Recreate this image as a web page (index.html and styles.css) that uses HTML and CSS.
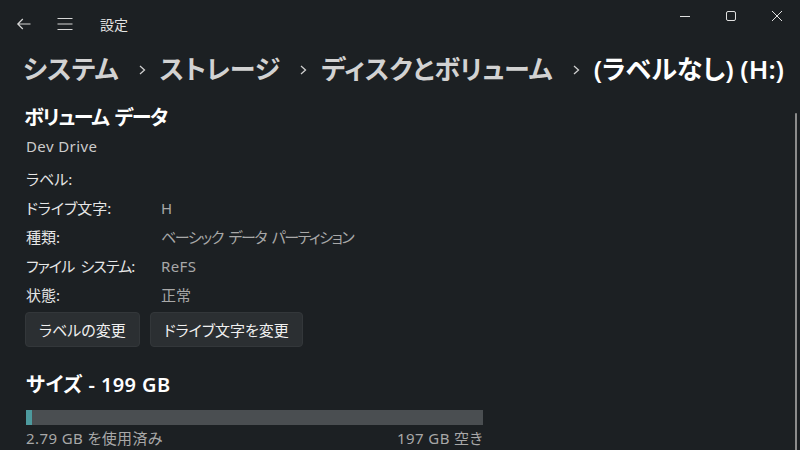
FILE: index.html
```html
<!DOCTYPE html>
<html lang="ja">
<head>
  <meta charset="UTF-8">
  <title>設定</title>
  <link rel="stylesheet" href="styles.css">
</head>
<body>
  <div class="window">
    <div class="titlebar">
      <div class="nav-icons">
        <svg class="icon back" width="16" height="16" viewBox="0 0 16 16">
          <path d="M14.5 8H1.8M6.8 3L1.8 8l5 5" fill="none" stroke="#d6d6d6" stroke-width="1.2"/>
        </svg>
        <svg class="icon menu" width="16" height="16" viewBox="0 0 16 16">
          <path d="M0.5 2.5h15M0.5 8h15M0.5 13.5h15" fill="none" stroke="#d6d6d6" stroke-width="1.2"/>
        </svg>
        <span class="app-name">設定</span>
      </div>
      <div class="win-controls">
        <div class="ctrl">
          <svg width="12" height="12" viewBox="0 0 12 12"><path d="M1 6.5h10" stroke="#e0e0e0" stroke-width="1"/></svg>
        </div>
        <div class="ctrl">
          <svg width="12" height="12" viewBox="0 0 12 12"><rect x="1.5" y="1.5" width="9" height="9" rx="1.5" fill="none" stroke="#e0e0e0" stroke-width="1"/></svg>
        </div>
        <div class="ctrl">
          <svg width="12" height="12" viewBox="0 0 12 12"><path d="M1 1l10 10M11 1L1 11" stroke="#e0e0e0" stroke-width="1"/></svg>
        </div>
      </div>
    </div>

    <div class="breadcrumb">
      <span class="crumb">システム</span>
      <svg class="chevron" width="10" height="12" viewBox="0 0 10 12"><path d="M3 2l4.5 4L3 10" fill="none" stroke="#cfcfcf" stroke-width="1.3"/></svg>
      <span class="crumb">ストレージ</span>
      <svg class="chevron" width="10" height="12" viewBox="0 0 10 12"><path d="M3 2l4.5 4L3 10" fill="none" stroke="#cfcfcf" stroke-width="1.3"/></svg>
      <span class="crumb">ディスクとボリューム</span>
      <svg class="chevron" width="10" height="12" viewBox="0 0 10 12"><path d="M3 2l4.5 4L3 10" fill="none" stroke="#cfcfcf" stroke-width="1.3"/></svg>
      <span class="crumb current">(ラベルなし) (H:)</span>
    </div>

    <div class="content">
      <h2 class="section-title volume-title">ボリューム データ</h2>
      <div class="subtitle">Dev Drive</div>

      <div class="props">
        <div class="prop-label">ラベル:</div><div class="prop-value"></div>
        <div class="prop-label">ドライブ文字:</div><div class="prop-value">H</div>
        <div class="prop-label">種類:</div><div class="prop-value jp-tight">ベーシック データ パーティション</div>
        <div class="prop-label jp">ファイル システム:</div><div class="prop-value latin">ReFS</div>
        <div class="prop-label">状態:</div><div class="prop-value">正常</div>
      </div>

      <div class="buttons">
        <button class="btn">ラベルの変更</button>
        <button class="btn">ドライブ文字を変更</button>
      </div>

      <h2 class="section-title size-title">サイズ - 199 GB</h2>
      <div class="usage">
        <div class="bar"><div class="bar-fill" style="width: 6px;"></div></div>
        <div class="usage-labels">
          <span>2.79 GB を使用済み</span>
          <span>197 GB 空き</span>
        </div>
      </div>
    </div>

    <div class="scrollbar"></div>
  </div>
</body>
</html>
```

FILE: styles.css
```css
body {
  margin: 0;
  padding: 0;
  background-color: #1c2023;
  color: #ffffff;
  font-family: "Noto Sans", "Noto Sans CJK JP", sans-serif;
  font-feature-settings: "palt";
  width: 800px;
  height: 450px;
  overflow: hidden;
}
.window {
  position: relative;
  height: 450px;
}
.titlebar {
  height: 48px;
  display: flex;
  justify-content: space-between;
  align-items: flex-start;
}
.nav-icons {
  height: 48px;
  display: flex;
  align-items: center;
  padding-left: 16px;
}
.icon {
  display: block;
}
.back {
  margin-right: 25px;
}
.menu {
  margin-right: 27px;
}
.app-name {
  font-size: 14px;
  color: #e4e4e4;
}
.win-controls {
  display: flex;
}
.ctrl {
  width: 46px;
  height: 32px;
  display: flex;
  justify-content: center;
  align-items: center;
}
.breadcrumb {
  display: flex;
  align-items: center;
  height: 40px;
  padding-left: 23px;
  white-space: nowrap;
}
.crumb {
  font-size: 26px;
  font-weight: 600;
  color: #d2d2d2;
}
.crumb.current {
  color: #ffffff;
}
.chevron {
  flex-shrink: 0;
  margin: 4px 13px 0 18px;
}
.content {
  padding: 16px 24px 0 24px;
}
.section-title {
  margin: 0;
  font-size: 20px;
  font-weight: 600;
  line-height: 28px;
  color: #ffffff;
}
.volume-title {
  letter-spacing: -1.3px;
  word-spacing: 2px;
}
.subtitle {
  font-size: 15px;
  line-height: 20px;
  color: #cccccc;
  letter-spacing: 0.4px;
  margin: 4px 0 8px 2px;
}
.props {
  display: grid;
  grid-template-columns: 135px 1fr;
  grid-auto-rows: 29px;
  align-items: center;
  font-size: 15px;
  padding-left: 2px;
}
.prop-label {
  color: #e6e6e6;
}
.prop-value {
  color: #a8a8a8;
}
.jp {
  letter-spacing: -0.9px;
  word-spacing: 3px;
}
.jp-tight {
  letter-spacing: -1.4px;
  word-spacing: 3px;
}
.latin {
  letter-spacing: 0.4px;
}
.buttons {
  display: flex;
  gap: 10px;
  margin-top: 3px;
  padding-left: 1px;
}
.btn {
  font-family: inherit;
  font-feature-settings: "palt";
  font-size: 15px;
  color: #f0f0f0;
  background-color: #2b2f32;
  border: 1px solid #33373a;
  border-radius: 4px;
  height: 35px;
  padding: 0 13px;
}
.size-title {
  margin-top: 24px;
  padding-left: 2px;
  letter-spacing: 0.4px;
}
.usage {
  width: 457px;
  margin-top: 11px;
  padding-left: 2px;
}
.bar {
  height: 15px;
  background-color: #4a4e51;
}
.bar-fill {
  height: 100%;
  background-color: #4d9a9e;
}
.usage-labels {
  display: flex;
  justify-content: space-between;
  font-size: 15px;
  line-height: 20px;
  color: #a8a8a8;
  letter-spacing: 0.4px;
  margin-top: 3px;
}
.scrollbar {
  position: absolute;
  right: 3px;
  top: 113px;
  width: 2px;
  height: 340px;
  border-radius: 1px;
  background-color: #8c8c8c;
}
```
